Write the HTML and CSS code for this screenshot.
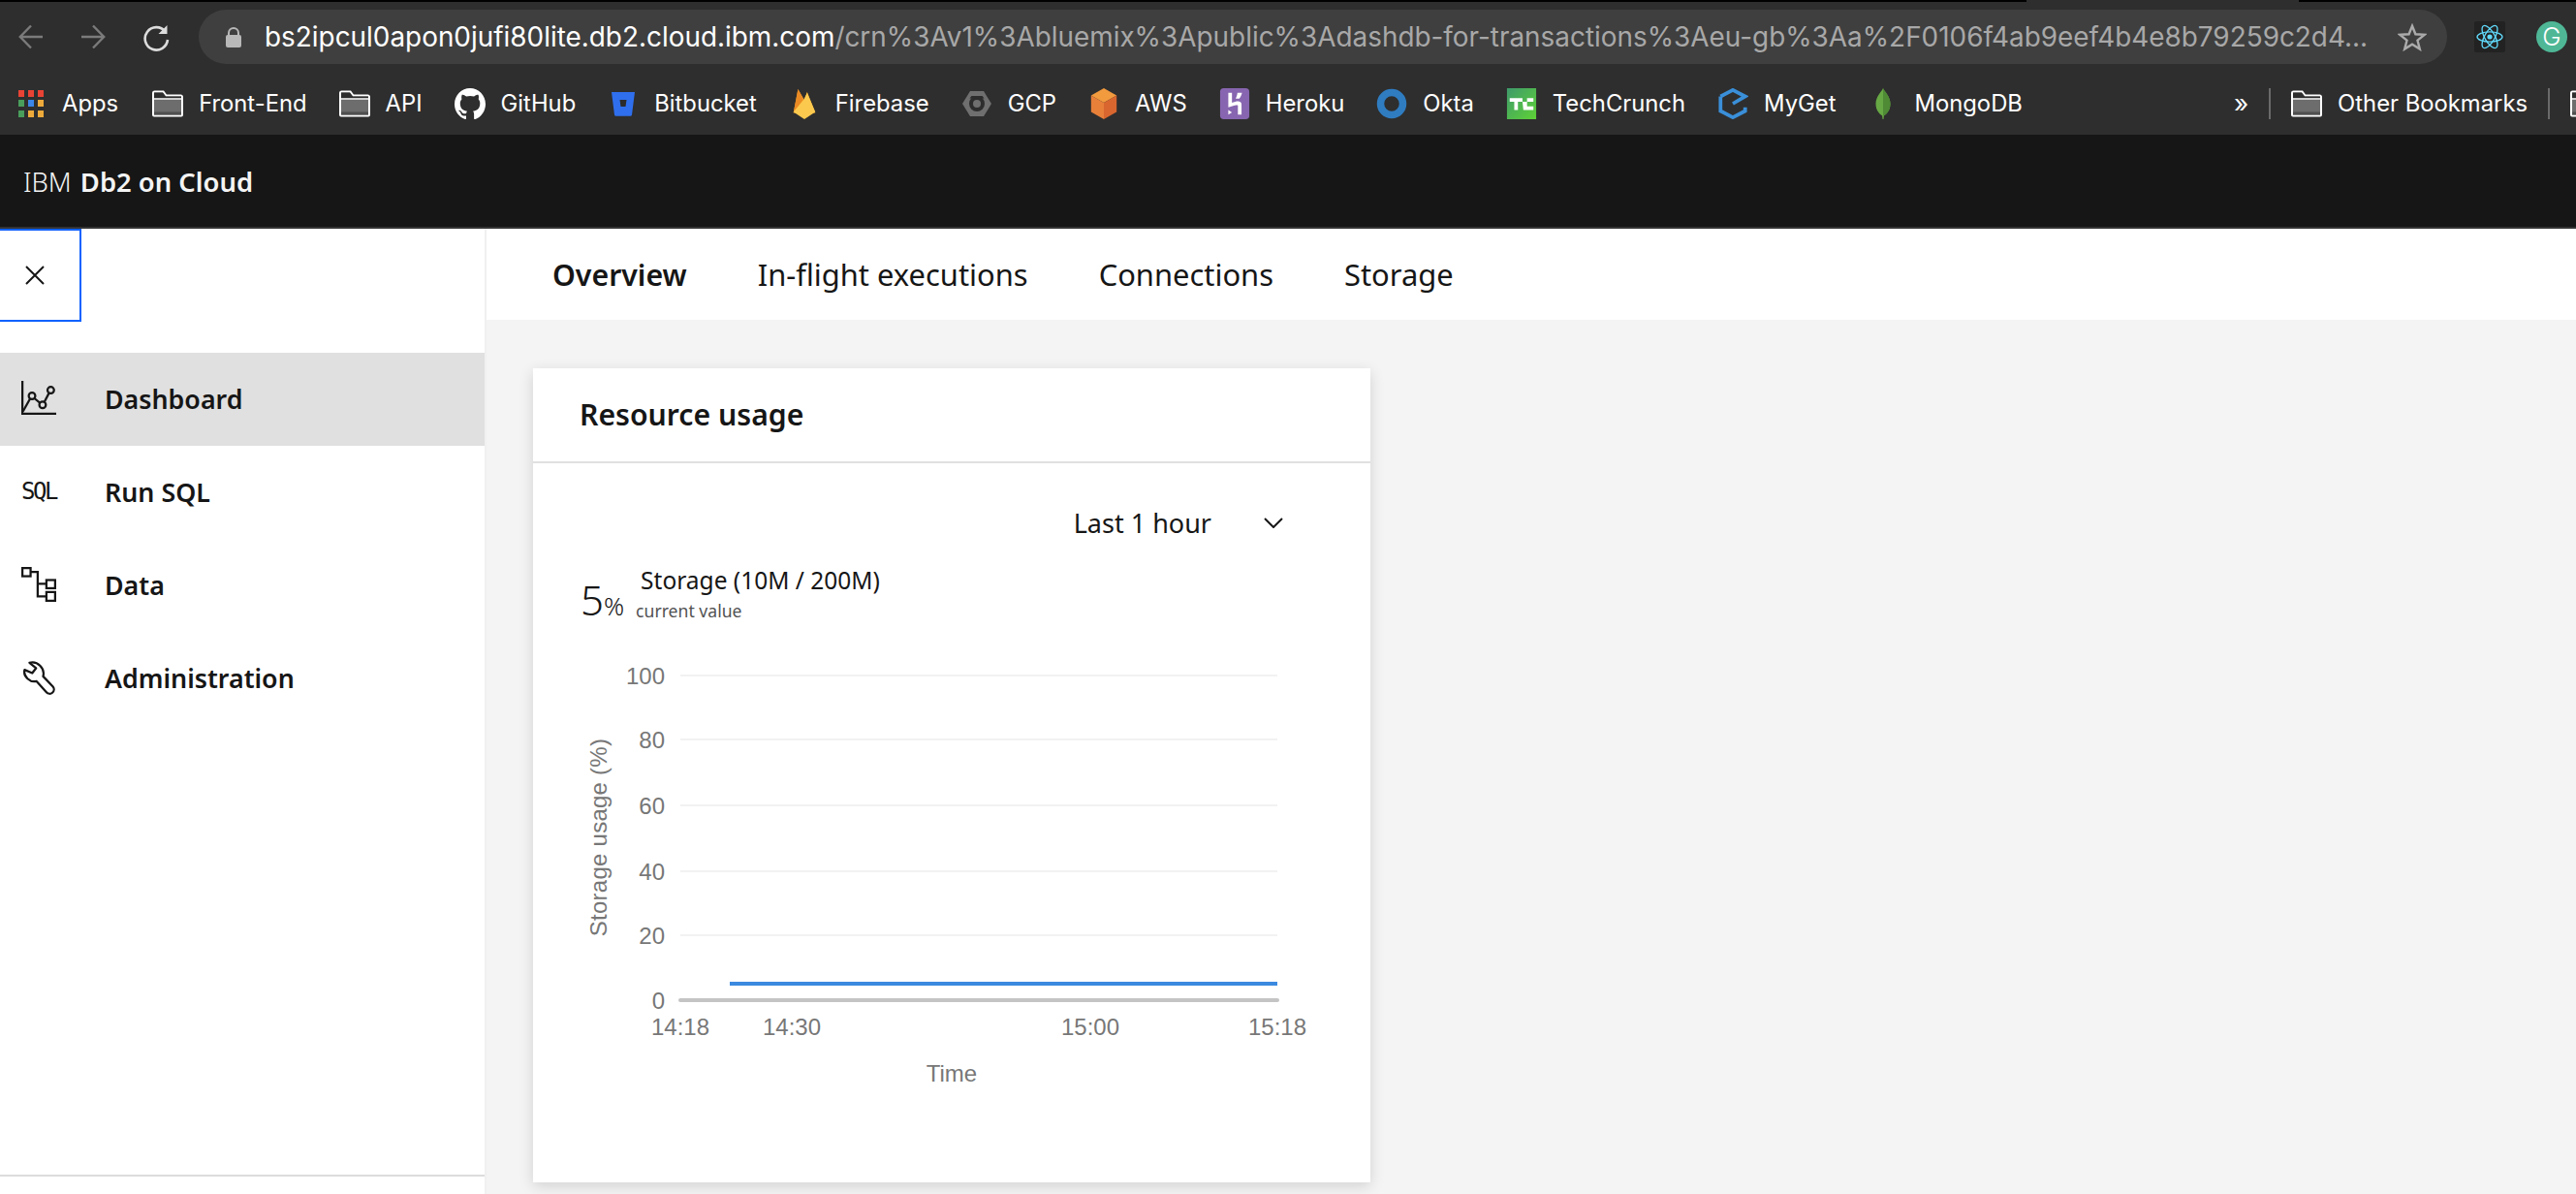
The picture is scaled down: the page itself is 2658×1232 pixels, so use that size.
FILE: index.html
```html
<!DOCTYPE html>
<html lang="en">
<head>
  <meta charset="UTF-8">
  <title>IBM Db2 on Cloud</title>
  <link rel="stylesheet" href="styles.css">
</head>
<body>
  <svg width="0" height="0" class="defs">
    <symbol id="folder" viewBox="0 0 32 27">
      <path d="M1 25V2.500A1.500 1.500 0 0 1 2.500 1h9l3 4h15A1.500 1.500 0 0 1 31 6.500V25a1 1 0 0 1-1 1H2a1 1 0 0 1-1-1z" fill="#6d6d6d" stroke="#fff" stroke-width="2"/>
      <path d="M2 2h9l3 4h16v3H2z" fill="#2d2d2d"/>
      <path d="M2 22h28v3H2z" fill="#4f4f4f"/>
      <path d="M1 8.500h30" stroke="#fff" stroke-width="1.500"/>
    </symbol>
  </svg>

  <div class="chrome">
    <div class="top-strip"><span class="tab-gap"></span></div>
    <div class="toolbar">
      <svg class="nav-btn" viewBox="0 0 26 26" fill="none" stroke="#7b7b7b" stroke-width="2.400"><path d="M25 13H2M13 1.500 1.800 13 13 24.500"/></svg>
      <svg class="nav-btn" viewBox="0 0 26 26" fill="none" stroke="#7b7b7b" stroke-width="2.400"><path d="M1 13h23M13 1.500 24.200 13 13 24.500"/></svg>
      <svg class="nav-btn reload" viewBox="0 0 28 28" fill="none" stroke="#dcdcdc" stroke-width="2.600"><path d="M23.500 7.500A11.700 11.700 0 1 0 26 16"/><path d="M25.500 1v9h-9z" fill="#dcdcdc" stroke="none"/></svg>
      <div class="address">
        <svg class="lock" viewBox="0 0 16 21"><path d="M3 9V6a5 5 0 0 1 10 0v3" fill="none" stroke="#b8b8b8" stroke-width="2"/><rect y="8" width="16" height="13" rx="2" fill="#b8b8b8"/></svg>
        <div class="url"><span class="host">bs2ipcul0apon0jufi80lite.db2.cloud.ibm.com</span>/crn%3Av1%3Abluemix%3Apublic%3Adashdb-for-transactions%3Aeu-gb%3Aa%2F0106f4ab9eef4b4e8b79259c2d4...</div>
        <svg class="star" viewBox="0 0 30 29" fill="none" stroke="#ababab" stroke-width="2.400"><path d="M15 2.800l3.400 8.500 9.100.6-7 5.800 2.300 8.900-7.800-4.900-7.800 4.900 2.300-8.900-7-5.800 9.100-.6z"/></svg>
      </div>
      <div class="ext react">
        <svg viewBox="0 0 32 32" fill="none" stroke="#61dafb" stroke-width="1.300"><ellipse cx="16" cy="16" rx="13" ry="5.200"/><ellipse cx="16" cy="16" rx="13" ry="5.200" transform="rotate(60 16 16)"/><ellipse cx="16" cy="16" rx="13" ry="5.200" transform="rotate(120 16 16)"/><circle cx="16" cy="16" r="2.600" fill="#61dafb" stroke="none"/></svg>
      </div>
      <div class="ext grammarly">G</div>
    </div>

    <div class="bookmarks">
      <a class="bm apps">
        <span class="apps-grid"><i class="r"></i><i class="r"></i><i class="r"></i><i class="g"></i><i class="b"></i><i class="y"></i><i class="g"></i><i class="y"></i><i class="y"></i></span>
        Apps
      </a>
      <a class="bm">
        <svg class="bm-icon"><use href="#folder"/></svg>
        Front-End
      </a>
      <a class="bm">
        <svg class="bm-icon"><use href="#folder"/></svg>
        API
      </a>
      <a class="bm">
        <svg class="bm-icon" viewBox="0 0 32 32"><path fill="#fff" d="M16 0C7.200 0 0 7.300 0 16.400c0 7.200 4.600 13.400 10.900 15.600.8.100 1.100-.4 1.100-.8v-2.800c-4.500 1-5.400-2.200-5.400-2.200-.7-1.900-1.800-2.400-1.800-2.400-1.500-1 .1-1 .1-1 1.600.1 2.500 1.700 2.500 1.700 1.400 2.500 3.800 1.800 4.700 1.400.1-1.100.6-1.800 1-2.200-3.600-.4-7.300-1.800-7.300-8.100 0-1.800.6-3.300 1.700-4.400-.2-.4-.7-2.100.2-4.400 0 0 1.300-.4 4.400 1.700a15 15 0 0 1 8 0c3-2.100 4.400-1.700 4.400-1.700.9 2.300.3 4 .2 4.400 1 1.100 1.600 2.600 1.600 4.400 0 6.300-3.700 7.700-7.300 8.100.6.500 1.100 1.500 1.100 3.100v4.500c0 .4.300.9 1.100.8C27.400 29.800 32 23.600 32 16.400 32 7.300 24.800 0 16 0z"/></svg>
        GitHub
      </a>
      <a class="bm">
        <svg class="bm-icon" viewBox="0 0 32 32"><path fill="#2f6fed" d="M4 4h24l-3 23.500a1.500 1.500 0 0 1-1.500 1.300h-15A1.500 1.500 0 0 1 7 27.500z"/><path fill="#2b2b2b" d="M12.500 12h7l-1 7h-5z"/></svg>
        Bitbucket
      </a>
      <a class="bm">
        <svg class="bm-icon" viewBox="0 0 32 34"><path fill="#f6a623" d="M4 27 9 1l7 12 3-9 9 23z"/><path fill="#ea8a25" d="M4 27 9 1l6 11z"/><path fill="#fcc94f" d="M4 26l11-13 4-8 9 21-12 8z"/></svg>
        Firebase
      </a>
      <a class="bm">
        <svg class="bm-icon" viewBox="0 0 32 32"><path fill="#6f6f6f" d="M9 3h14l8 13-8 13H9L1 16z"/><circle cx="16" cy="16" r="8" fill="#2d2d2d"/><circle cx="16" cy="16" r="4" fill="#6f6f6f"/><path fill="#2d2d2d" d="M10.500 8h11l2 2.500h-15z"/></svg>
        GCP
      </a>
      <a class="bm">
        <svg class="bm-icon" viewBox="0 0 32 34"><path fill="#f19a3e" d="M16 0l14 8-14 8-14-8z"/><path fill="#e8803a" d="M2 8l14 8v18L2 26z"/><path fill="#d9662f" d="M30 8 16 16v18l14-8z"/></svg>
        AWS
      </a>
      <a class="bm">
        <svg class="bm-icon" viewBox="0 0 32 34"><rect width="32" height="34" rx="4" fill="#8765b0"/><path fill="#fff" d="M9 5h4v11c3-1.300 6-2 8-1.500 2 .5 2.500 2 2.500 3.500v11h-4V19c0-1-3-.5-10.500 2zM19 5h5c-.5 2.500-1.500 4.500-3 6.500h-4c1-2 1.700-4 2-6.500zM9 24l4 2.500L9 29z"/></svg>
        Heroku
      </a>
      <a class="bm">
        <svg class="bm-icon" viewBox="0 0 32 32"><circle cx="16" cy="16" r="11.500" fill="none" stroke="#2f7cc1" stroke-width="7.500"/></svg>
        Okta
      </a>
      <a class="bm">
        <svg class="bm-icon" viewBox="0 0 32 34"><defs><linearGradient id="tc" x1="0" y1="0" x2="1" y2="1"><stop offset="0" stop-color="#3f9a6b"/><stop offset="1" stop-color="#5ed236"/></linearGradient></defs><rect width="32" height="34" fill="url(#tc)"/><path fill="#fff" d="M3 11h14v4h-5v9H8v-9H3zM17 15h5v-4h7v4h-7v5h7v4H18z"/></svg>
        TechCrunch
      </a>
      <a class="bm">
        <svg class="bm-icon" viewBox="0 0 32 34" fill="none" stroke="#3a8fd9" stroke-width="4"><path d="M2.500 9v16l13.500 7 13.500-7v-4"/><path d="M2.500 9 16 2l13.500 7L16 17"/></svg>
        MyGet
      </a>
      <a class="bm">
        <svg class="bm-icon" viewBox="0 0 32 34"><path fill="#67a844" d="M16 0c1 3 8 9 8 17s-5 12-7 13l-.5 4h-1l-.5-4c-2-1-7-5-7-13s7-14 8-17z"/><path fill="#4f8a35" d="M16 0c1 3 8 9 8 17s-5 12-7 13h-1z"/></svg>
        MongoDB
      </a>
      <span class="more">»</span>
      <span class="bm-sep"></span>
      <a class="bm">
        <svg class="bm-icon"><use href="#folder"/></svg>
        Other Bookmarks
      </a>
      <span class="bm-sep"></span>
      <svg class="bm-icon bm-last"><use href="#folder"/></svg>
    </div>
  </div>

  <header class="app-header"><span class="brand-light">IBM</span>&nbsp;<b>Db2 on Cloud</b></header>

  <div class="app-body">
    <aside class="sidebar">
      <button class="close-btn" aria-label="Close menu">
        <svg viewBox="0 0 20 20" fill="none" stroke="#161616" stroke-width="2"><path d="M1 1l18 18M19 1 1 19"/></svg>
      </button>
      <nav class="side-nav">
        <a class="side-item active">
          <svg class="side-icon" viewBox="0 0 32 32" fill="none" stroke="#161616" stroke-width="2"><path d="M1 0v30h31"/><path d="M1.500 28 8 16.500"/><circle cx="9.800" cy="13.800" r="3"/><path d="M12 16l5.500 4.500"/><circle cx="19.500" cy="22" r="3"/><path d="M21 19.500 25.500 11"/><circle cx="27" cy="8.500" r="3"/></svg>
          Dashboard
        </a>
        <a class="side-item">
          <span class="side-icon sql-icon">SQL</span>
          Run SQL
        </a>
        <a class="side-item">
          <svg class="side-icon" viewBox="0 0 32 32" fill="none" stroke="#161616" stroke-width="2"><rect x="1" y="1" width="7.500" height="7.500"/><rect x="23" y="12" width="8" height="7.500"/><rect x="23" y="23" width="8" height="8"/><path d="M8.500 4.500H15V27h8M15 15.500h8"/></svg>
          Data
        </a>
        <a class="side-item">
          <svg class="side-icon" viewBox="0 0 32 32" fill="none" stroke="#161616" stroke-width="2" stroke-linejoin="round"><path d="M7.500 2.500l6 5-3.500 4.500-7-3C1.500 15 8 21 14 19.500L23 29.500a3.500 3.500 0 0 0 6-5L20 15c2-7-5-14.500-12.500-12.500z"/></svg>
          Administration
        </a>
      </nav>
      <div class="side-footer"></div>
    </aside>

    <main class="content">
      <div class="tabs">
        <a class="tab selected">Overview</a>
        <a class="tab">In-flight executions</a>
        <a class="tab">Connections</a>
        <a class="tab">Storage</a>
      </div>

      <div class="dashboard">
        <section class="card">
          <h2 class="card-title">Resource usage</h2>
          <div class="card-body">
            <div class="range-row">
              <span>Last 1 hour</span>
              <svg class="chevron" viewBox="0 0 20 11" fill="none" stroke="#161616" stroke-width="2"><path d="M1 1l9 9 9-9"/></svg>
            </div>
            <div class="metric">
              <div class="metric-value">5<small>%</small></div>
              <div class="metric-text">
                <div class="metric-name">Storage (10M / 200M)</div>
                <div class="metric-sub">current value</div>
              </div>
            </div>
            <svg class="chart" viewBox="0 0 864 460" width="864" height="460">
              <g class="grid">
                <line x1="152" x2="768" y1="17" y2="17"/>
                <line x1="152" x2="768" y1="83" y2="83"/>
                <line x1="152" x2="768" y1="151" y2="151"/>
                <line x1="152" x2="768" y1="219" y2="219"/>
                <line x1="152" x2="768" y1="285" y2="285"/>
              </g>
              <line class="axis" x1="152" x2="768" y1="352" y2="352"/>
              <line class="series" x1="203" x2="768" y1="335" y2="335"/>
              <g class="y-ticks">
                <text x="136" y="26">100</text>
                <text x="136" y="92">80</text>
                <text x="136" y="160">60</text>
                <text x="136" y="228">40</text>
                <text x="136" y="294">20</text>
                <text x="136" y="361">0</text>
              </g>
              <g class="x-ticks">
                <text x="152" y="388">14:18</text>
                <text x="267" y="388">14:30</text>
                <text x="575" y="388">15:00</text>
                <text x="768" y="388">15:18</text>
                <text x="432" y="436">Time</text>
                <text class="y-title" x="76" y="184" transform="rotate(-90 76 184)">Storage usage (%)</text>
              </g>
            </svg>
          </div>
        </section>
      </div>
    </main>
  </div>
</body>
</html>
```

FILE: styles.css
```css
* {
  box-sizing: border-box;
}
html, body {
  margin: 0;
}
body {
  width: 2658px;
  height: 1232px;
  overflow: hidden;
  background: #f4f4f4;
  font-family: "Noto Sans", sans-serif;
  color: #161616;
}
.defs {
  position: absolute;
}

/* browser chrome */
.chrome {
  height: 139px;
  background: #2e2e2e;
  font-family: Inter, sans-serif;
  color: #fff;
}
.top-strip {
  height: 2px;
  background: #000;
  padding-left: 2091px;
}
.tab-gap {
  display: block;
  width: 281px;
  height: 2px;
  background: #2e2e2e;
}
.toolbar {
  height: 64px;
  padding: 8px 10px 0 19px;
  display: flex;
  align-items: flex-start;
}
.nav-btn {
  width: 26px;
  height: 26px;
  margin: 15px 38px 0 0;
  flex: none;
}
.reload {
  width: 28px;
  height: 28px;
  margin-right: 30px;
}
.address {
  width: 2320px;
  height: 56px;
  border-radius: 28px;
  background: #3f3f3f;
  display: flex;
  align-items: center;
  padding: 0 21px 0 28px;
  flex: none;
}
.lock {
  width: 16px;
  height: 21px;
  flex: none;
  margin-right: 24px;
}
.url {
  flex: 1;
  font-size: 27.9px;
  color: #a8a8a8;
  white-space: nowrap;
  overflow: hidden;
}
.host {
  color: #fff;
}
.star {
  width: 30px;
  height: 29px;
  flex: none;
  margin-left: 20px;
}
.ext {
  width: 32px;
  height: 32px;
  margin-top: 12px;
  flex: none;
}
.react {
  margin-left: 28px;
  background: #222;
  border-radius: 2px;
}
.react svg {
  display: block;
}
.grammarly {
  margin-left: 32px;
  border-radius: 50%;
  background: #4fb796;
  color: #fff;
  font-size: 26px;
  font-weight: 300;
  line-height: 32px;
  text-align: center;
}

.bookmarks {
  height: 73px;
  padding: 8px 0 0 16px;
  display: flex;
  align-items: center;
  gap: 33px;
  font-size: 23.8px;
  white-space: nowrap;
}
.bm {
  display: flex;
  align-items: center;
  gap: 16px;
  flex: none;
}
.apps {
  margin-right: 2px;
}
.bm-icon {
  width: 32px;
  height: 32px;
  flex: none;
}
.bm-last {
  margin-right: -26px;
}
.apps-grid {
  width: 32px;
  height: 28px;
  padding: 0 3px;
  display: grid;
  grid-template-columns: repeat(3, 6px);
  grid-auto-rows: 7px;
  justify-content: space-between;
  align-content: space-between;
}
.apps-grid i {
  display: block;
}
.apps-grid .r { background: #e94335; }
.apps-grid .g { background: #4a9e5c; }
.apps-grid .b { background: #3b86e8; }
.apps-grid .y { background: #edaa3b; }
.more {
  margin-left: auto;
  font-size: 26px;
}
.bm-sep {
  width: 2px;
  height: 32px;
  background: #6a6a6a;
  margin: 0 -12px;
}

/* app header */
.app-header {
  height: 97px;
  background: #161616;
  border-bottom: 2px solid #333;
  padding: 2px 0 0 24px;
  display: flex;
  align-items: center;
  font-size: 27.4px;
  color: #f4f4f4;
}
.app-header b {
  font-weight: 600;
}
.brand-light {
  font-weight: 300;
  margin-right: 2px;
}

.app-body {
  display: flex;
  height: 996px;
}

/* side nav */
.sidebar {
  width: 502px;
  flex: none;
  background: #fff;
  border-right: 2px solid #f0f0f0;
  display: flex;
  flex-direction: column;
}
.close-btn {
  width: 84px;
  height: 96px;
  padding: 0;
  background: #fff;
  border: 2px solid #0f62fe;
  border-left: none;
  display: flex;
  align-items: center;
  justify-content: center;
  flex: none;
}
.close-btn svg {
  width: 20px;
  height: 20px;
  margin-right: 10px;
}
.side-nav {
  margin-top: 32px;
  flex: 1;
}
.side-item {
  height: 96px;
  padding: 0 0 2px 22px;
  display: flex;
  align-items: center;
  gap: 50px;
  font-size: 26.8px;
  font-weight: 600;
}
.side-item.active {
  background: #e0e0e0;
}
.side-icon {
  width: 36px;
  height: 36px;
  flex: none;
}
.sql-icon {
  font-family: "DejaVu Sans Mono", monospace;
  font-size: 24px;
  font-weight: 400;
  line-height: 36px;
  letter-spacing: -2.400px;
}
.side-footer {
  height: 20px;
  border-top: 2px solid #dcdcdc;
}

/* tabs and card */
.content {
  flex: 1;
}
.tabs {
  height: 94px;
  background: #fff;
  padding-left: 68px;
  display: flex;
  align-items: center;
  gap: 73px;
  font-size: 30.9px;
}
.tab.selected {
  font-size: 30.3px;
  font-weight: 600;
}
.dashboard {
  padding: 50px 0 0 48px;
}
.card {
  width: 864px;
  height: 840px;
  background: #fff;
  box-shadow: 0 4px 14px rgba(0, 0, 0, 0.14);
}
.card-title {
  margin: 0;
  height: 98px;
  padding: 0 0 2px 48px;
  border-bottom: 2px solid #e0e0e0;
  display: flex;
  align-items: center;
  font-size: 30.2px;
  font-weight: 600;
}
.range-row {
  height: 80px;
  padding-right: 90px;
  margin-top: 21px;
  display: flex;
  align-items: center;
  justify-content: flex-end;
  gap: 54px;
  font-size: 27px;
}
.chevron {
  width: 20px;
  height: 11px;
}
.metric {
  display: flex;
  align-items: flex-end;
  padding-left: 49px;
  height: 60px;
  margin-top: 5px;
}
.metric-value {
  font-size: 42px;
  font-weight: 300;
  line-height: 50px;
  margin-bottom: -6px;
}
.metric-value small {
  font-size: 26px;
}
.metric-text {
  margin-left: 12px;
}
.metric-name {
  font-size: 24.5px;
  line-height: 34px;
  margin-left: 5px;
}
.metric-sub {
  font-size: 17.600px;
  line-height: 28px;
  color: #525252;
}
.chart {
  display: block;
  margin-top: 36px;
}
.chart text {
  font-family: "Liberation Sans", sans-serif;
  font-size: 24px;
  fill: #777;
}
.chart .y-title {
  letter-spacing: 0.25px;
}
.grid line {
  stroke: #f2f2f2;
  stroke-width: 2;
}
.axis {
  stroke: #c4c4c4;
  stroke-width: 4;
  stroke-linecap: round;
}
.series {
  stroke: #3b8ae0;
  stroke-width: 4;
}
.y-ticks text {
  text-anchor: end;
}
.x-ticks text {
  text-anchor: middle;
}
```
